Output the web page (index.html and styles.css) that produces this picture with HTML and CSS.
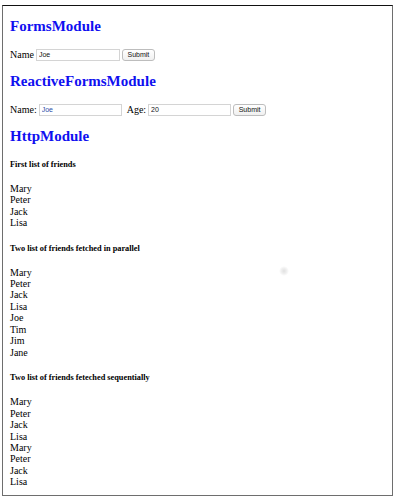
FILE: index.html
```html
<!DOCTYPE html>
<html>
<head>
<meta charset="utf-8">
<link rel="stylesheet" href="styles.css">
</head>
<body>
<div class="frame">
  <h2 class="title">FormsModule</h2>
  <form class="row">
    <label class="lbl">Name</label>
    <input class="field w1" type="text" value="Joe">
    <button class="btn" type="button">Submit</button>
  </form>

  <h2 class="title">ReactiveFormsModule</h2>
  <form class="row">
    <label class="lbl">Name:</label>
    <input class="field w2 blue" type="text" value="Joe">
    <label class="lbl age">Age:</label>
    <input class="field w2" type="text" value="20">
    <button class="btn" type="button">Submit</button>
  </form>

  <h2 class="title">HttpModule</h2>
  <h5 class="sub">First list of friends</h5>
  <div class="list">
    <div>Mary</div><div>Peter</div><div>Jack</div><div>Lisa</div>
  </div>
  <h5 class="sub">Two list of friends fetched in parallel</h5>
  <div class="list">
    <div>Mary</div><div>Peter</div><div>Jack</div><div>Lisa</div>
    <div>Joe</div><div>Tim</div><div>Jim</div><div>Jane</div>
  </div>
  <h5 class="sub">Two list of friends feteched sequentially</h5>
  <div class="list">
    <div>Mary</div><div>Peter</div><div>Jack</div><div>Lisa</div>
    <div>Mary</div><div>Peter</div><div>Jack</div><div>Lisa</div>
  </div>
  <span class="cursor"></span>
</div>
</body>
</html>
```

FILE: styles.css
```css
html, body {
  margin: 0;
  padding: 0;
  background: #fff;
}

body {
  padding: 5px 0 0 2px;
  font-family: "Liberation Serif", "Times New Roman", serif;
  font-size: 10px;
  line-height: 11.45px;
  color: #000;
}

.frame {
  position: relative;
  box-sizing: border-box;
  width: 391px;
  height: 491px;
  overflow: hidden;
  border: 1px solid #6e6e6e;
  border-top-color: #111;
  padding: 0 0 0 7px;
  display: flow-root;
}

.title {
  font-size: 15px;
  line-height: 17.25px;
  font-weight: bold;
  color: #1010f0;
  margin: 12px 0 13.5px;
}

.row {
  display: flex;
  align-items: center;
  height: 12px;
  margin: 0;
}

.lbl {
  margin-right: 2px;
}

.age {
  margin-left: 3px;
}

.field {
  box-sizing: border-box;
  height: 12px;
  border: 1px solid #d4d4d4;
  padding: 0 2px;
  font-family: "Liberation Sans", Arial, sans-serif;
  font-size: 7px;
  color: #111;
  background: #fff;
  margin: 0 2px 0 0;
  outline: none;
}

.w1 { width: 84px; }
.w2 { width: 83px; }
.blue { color: #2b4fa8; }

.btn {
  box-sizing: border-box;
  width: 33px;
  height: 12px;
  padding: 0;
  margin: 0 0 0 0;
  border: 1px solid #bdbdbd;
  border-radius: 3px;
  background: linear-gradient(#ffffff, #f0f0f0);
  font-family: "Liberation Sans", Arial, sans-serif;
  font-size: 7px;
  color: #111;
  line-height: 10px;
}

.sub {
  font-size: 8.3px;
  line-height: 9.5px;
  font-weight: bold;
  margin: 15px 0 13.5px;
}

.list {
  line-height: 11.45px;
}

.cursor {
  position: absolute;
  left: 276px;
  top: 260px;
  width: 10px;
  height: 10px;
  border-radius: 50%;
  background: radial-gradient(circle, rgba(0,0,0,0.12) 0%, rgba(0,0,0,0.05) 45%, rgba(0,0,0,0) 70%);
}
```
